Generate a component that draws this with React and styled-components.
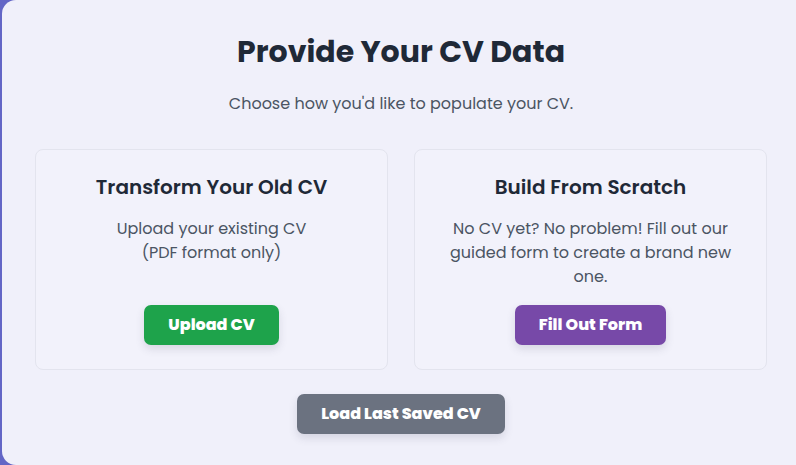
import React from "react";
import styled, { createGlobalStyle } from "styled-components";

const GlobalStyle = createGlobalStyle`
  * { box-sizing: border-box; }
  html, body {
    margin: 0;
    padding: 0;
    height: 100%;
    background: #6366c6;
    overflow: hidden;
  }
  body {
    font-family: "Poppins", "Inter", "Noto Sans", sans-serif;
    color: #1f2937;
  }
`;

const Panel = styled.div`
  margin-left: 2px;
  min-height: 465px;
  background: #f0f0fa;
  border-radius: 14px 0 0 14px;
  padding: 34px 29px 0 33px;
  display: flex;
  flex-direction: column;
  align-items: center;
`;

const Heading = styled.h1`
  margin: 0 0 22px;
  font-size: 30px;
  line-height: 36px;
  font-weight: 700;
  color: #1f2937;
`;

const Subtitle = styled.p`
  margin: 0 0 33px;
  font-size: 16px;
  line-height: 24px;
  color: #4b5563;
`;

const Options = styled.div`
  width: 732px;
  display: grid;
  grid-template-columns: 1fr 1fr;
  gap: 26px;
`;

const Card = styled.div`
  display: flex;
  flex-direction: column;
  align-items: center;
  text-align: center;
  padding: 23px 24px 24px;
  background: #f2f2fb;
  border: 1px solid #e3e4ee;
  border-radius: 8px;
  min-height: 221px;
`;

const CardTitle = styled.h2`
  margin: 0 0 16px;
  font-size: 20px;
  line-height: 28px;
  font-weight: 600;
  color: #1f2937;
`;

const CardText = styled.p`
  margin: 0 0 16px;
  font-size: 16px;
  line-height: 24px;
  color: #4b5563;
`;

const Button = styled.button`
  all: unset;
  margin-top: ${(p) => (p.$push ? "auto" : "0")};
  background: ${(p) => p.$color};
  color: #ffffff;
  font-family: "Poppins", "Inter", "Noto Sans", sans-serif;
  font-size: 16px;
  line-height: 24px;
  font-weight: 800;
  padding: 8px 24px;
  border-radius: 7px;
  box-shadow: 0 4px 8px rgba(60, 60, 90, 0.15);
  cursor: pointer;
`;

const Footer = styled.div`
  margin-top: 24px;
`;

export default function App() {
  return (
    <>
      <GlobalStyle />
      <Panel>
        <Heading>Provide Your CV Data</Heading>
        <Subtitle>Choose how you'd like to populate your CV.</Subtitle>
        <Options>
          <Card>
            <CardTitle>Transform Your Old CV</CardTitle>
            <CardText>
              Upload your existing CV
              <br />
              (PDF format only)
            </CardText>
            <Button $push $color="#1ea34b">Upload CV</Button>
          </Card>
          <Card>
            <CardTitle>Build From Scratch</CardTitle>
            <CardText>
              No CV yet? No problem! Fill out our guided form to create a brand new one.
            </CardText>
            <Button $push $color="#7749a8">Fill Out Form</Button>
          </Card>
        </Options>
        <Footer>
          <Button $color="#6b7280">Load Last Saved CV</Button>
        </Footer>
      </Panel>
    </>
  );
}
